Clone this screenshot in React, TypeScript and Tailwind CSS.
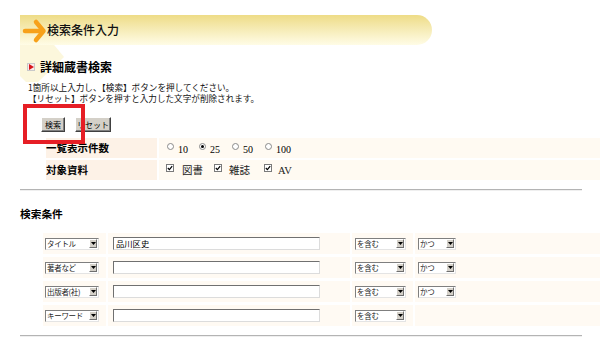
import type { ReactNode } from 'react'

const jp = "font-['Noto_Sans_CJK_JP','Noto_Sans',sans-serif]"
const serif = "font-['Liberation_Serif','Noto_Sans_CJK_JP',serif]"

function Select({ label, width }: { label: string; width: string }) {
  return (
    <div
      className={`flex h-[12px] items-center border border-t-[#7f7f7f] border-l-[#7f7f7f] border-r-[#e4e4e4] border-b-[#e4e4e4] bg-white ${width}`}
    >
      <span className="flex-1 whitespace-nowrap pl-[1px] text-[7.5px] leading-none tracking-[-0.3px] text-[#222]">{label}</span>
      <span className="mr-[1px] flex h-[9px] w-[8px] shrink-0 items-center justify-center border border-t-white border-l-white border-r-[#6f6f6f] border-b-[#6f6f6f] bg-[#d4d0c8]">
        <svg width="5" height="3" viewBox="0 0 5 3">
          <polygon points="0,0 5,0 2.5,3" fill="#000" />
        </svg>
      </span>
    </div>
  )
}

function Button({ children, className = '' }: { children: ReactNode; className?: string }) {
  return (
    <div
      className={`flex h-[15px] items-center justify-center border border-t-white border-l-white border-r-[#404040] border-b-[#404040] bg-[#d4d0c8] text-[8px] leading-none shadow-[inset_-1px_-1px_0_#808080] ${className}`}
    >
      {children}
    </div>
  )
}

function Radio({ checked }: { checked?: boolean }) {
  return (
    <span className="flex h-[7px] w-[7px] -translate-y-[2px] items-center justify-center rounded-full border border-[#8a8a8a] bg-white">
      {checked && <span className="h-[3px] w-[3px] rounded-full bg-black" />}
    </span>
  )
}

function Check() {
  return (
    <span className="flex h-[8px] w-[8px] -translate-y-[2px] items-center justify-center border border-[#7a7a7a] bg-white">
      <svg width="6" height="6" viewBox="0 0 6 6">
        <path d="M0.8 3 L2.4 4.6 L5.2 1.2" stroke="#000" strokeWidth="1.2" fill="none" />
      </svg>
    </span>
  )
}

function Rule() {
  return <div className="ml-[20px] w-[562px] border-t border-b border-t-[#b4b4b4] border-b-[#efefef]" />
}

const counts = [
  { v: '10', ml: 'ml-[8px]' },
  { v: '25', ml: 'ml-[11px]', on: true },
  { v: '50', ml: 'ml-[12px]' },
  { v: '100', ml: 'ml-[12px]' },
]

const kinds = [
  { v: '図書', ml: 'ml-[7px]', gap: 'gap-[8px]' },
  { v: '雑誌', ml: 'ml-[11px]', gap: 'gap-[7px]' },
  { v: 'AV', ml: 'ml-[14px]', gap: 'gap-[6px]' },
]

const rows = [
  { field: 'タイトル', value: '品川区史', join: true },
  { field: '著者など', value: '', join: true },
  { field: '出版者(社)', value: '', join: true },
  { field: 'キーワード', value: '', join: false },
]

export default function App() {
  return (
    <div className={`relative h-[342px] w-[600px] overflow-hidden bg-white text-black ${jp}`}>
      {/* pale chevron behind the heading */}
      <svg className="absolute left-0 top-0" width="80" height="90" viewBox="0 0 80 90">
        <polygon points="20,40 50,40 64,57 38,82 26,82 20,76" fill="#fcf7dc" />
      </svg>

      <div className="relative pl-[20px] pt-[15px]">
        <div className="flex h-[30px] w-[412px] items-center rounded-r-[15px] bg-gradient-to-b from-[#eedc86] to-[#fffce6]">
          <svg className="ml-[2px]" width="25" height="30" viewBox="0 0 25 30">
            <path d="M3 16 H20" stroke="#f7a11a" strokeWidth="4.5" strokeLinecap="round" />
            <path d="M14 7 L21.5 16 L14 25" stroke="#f7a11a" strokeWidth="4.5" strokeLinecap="round" strokeLinejoin="round" fill="none" />
          </svg>
          <span className="text-[12px] font-medium leading-none text-[#111]">検索条件入力</span>
        </div>
      </div>

      <div className="relative ml-[27px] mt-[15px] flex h-[14px] items-center gap-[5px]">
        <span className="flex h-[8px] w-[8px] items-center justify-center border border-[#c9c9c9] bg-[#fbeaea]">
          <svg width="5" height="6" viewBox="0 0 5 6">
            <polygon points="0,0 5,3 0,6" fill="#d8141c" />
          </svg>
        </span>
        <span className="text-[12px] font-bold leading-none">詳細蔵書検索</span>
      </div>

      <div className="ml-[28px] mt-[8px] text-[8.6px] leading-[11px] text-[#111]">
        <p className="h-[11px]">1箇所以上入力し、【検索】ボタンを押してください。</p>
        <p className="h-[11px]">【リセット】ボタンを押すと入力した文字が削除されます。</p>
      </div>

      <div className="ml-[41px] mt-[13px] flex gap-[10px]">
        <Button className="w-[24px]">検索</Button>
        <Button className="w-[36px]">リセット</Button>
      </div>

      <div className="ml-[46px] mt-[6px] grid grid-cols-[111px_1fr] gap-[2px]">
        <div className="flex h-[20px] items-center bg-[#fdf2e7] text-[10.5px] font-bold leading-none">一覧表示件数</div>
        <div className={`flex h-[20px] items-center bg-[#fffaf2] text-[10px] ${serif}`}>
          {counts.map((c) => (
            <span key={c.v} className={`flex items-center gap-[4px] ${c.ml}`}>
              <Radio checked={c.on} />
              <span className="translate-y-[2px] leading-none">{c.v}</span>
            </span>
          ))}
        </div>
        <div className="flex h-[20px] items-center bg-[#fdf2e7] text-[10.5px] font-bold leading-none">対象資料</div>
        <div className={`flex h-[20px] items-center bg-[#fffaf2] text-[10.5px] ${serif}`}>
          {kinds.map((k) => (
            <span key={k.v} className={`flex items-center ${k.gap} ${k.ml}`}>
              <Check />
              <span className="translate-y-[1px] leading-none text-[#222]">{k.v}</span>
            </span>
          ))}
        </div>
      </div>

      <div className="mt-[9px]">
        <Rule />
      </div>

      <div className="ml-[20px] mt-[16px] text-[10.7px] font-bold leading-[14px]">検索条件</div>

      <div className="ml-[43px] mt-[12px] grid grid-cols-[63px_242px_61px_1fr] gap-x-[2px] gap-y-[3px]">
        {rows.map((r) => (
          <div key={r.field} className="contents">
            <div className="flex h-[21px] items-center bg-[#fffaf3] pl-[2px]">
              <Select label={r.field} width="w-[54px]" />
            </div>
            <div className="flex h-[21px] items-center bg-[#fffaf3] pl-[5px]">
              <div className="flex h-[13px] w-[207px] items-center border border-t-[#707070] border-l-[#707070] border-r-[#dcdcdc] border-b-[#dcdcdc] bg-white pl-[2px] text-[8.3px] leading-none">
                {r.value}
              </div>
            </div>
            <div className="flex h-[21px] items-center bg-[#fffaf3] pl-[3px]">
              <Select label="を含む" width="w-[51px]" />
            </div>
            <div className="flex h-[21px] items-center bg-[#fffaf3] pl-[3px]">
              {r.join && <Select label="かつ" width="w-[38px]" />}
            </div>
          </div>
        ))}
      </div>

      <div className="mt-[9px]">
        <Rule />
      </div>

      {/* red annotation frame */}
      <div className="pointer-events-none absolute left-[23px] top-[104px] h-[40px] w-[62px] border-[4px] border-[#e61e25]" />
    </div>
  )
}
